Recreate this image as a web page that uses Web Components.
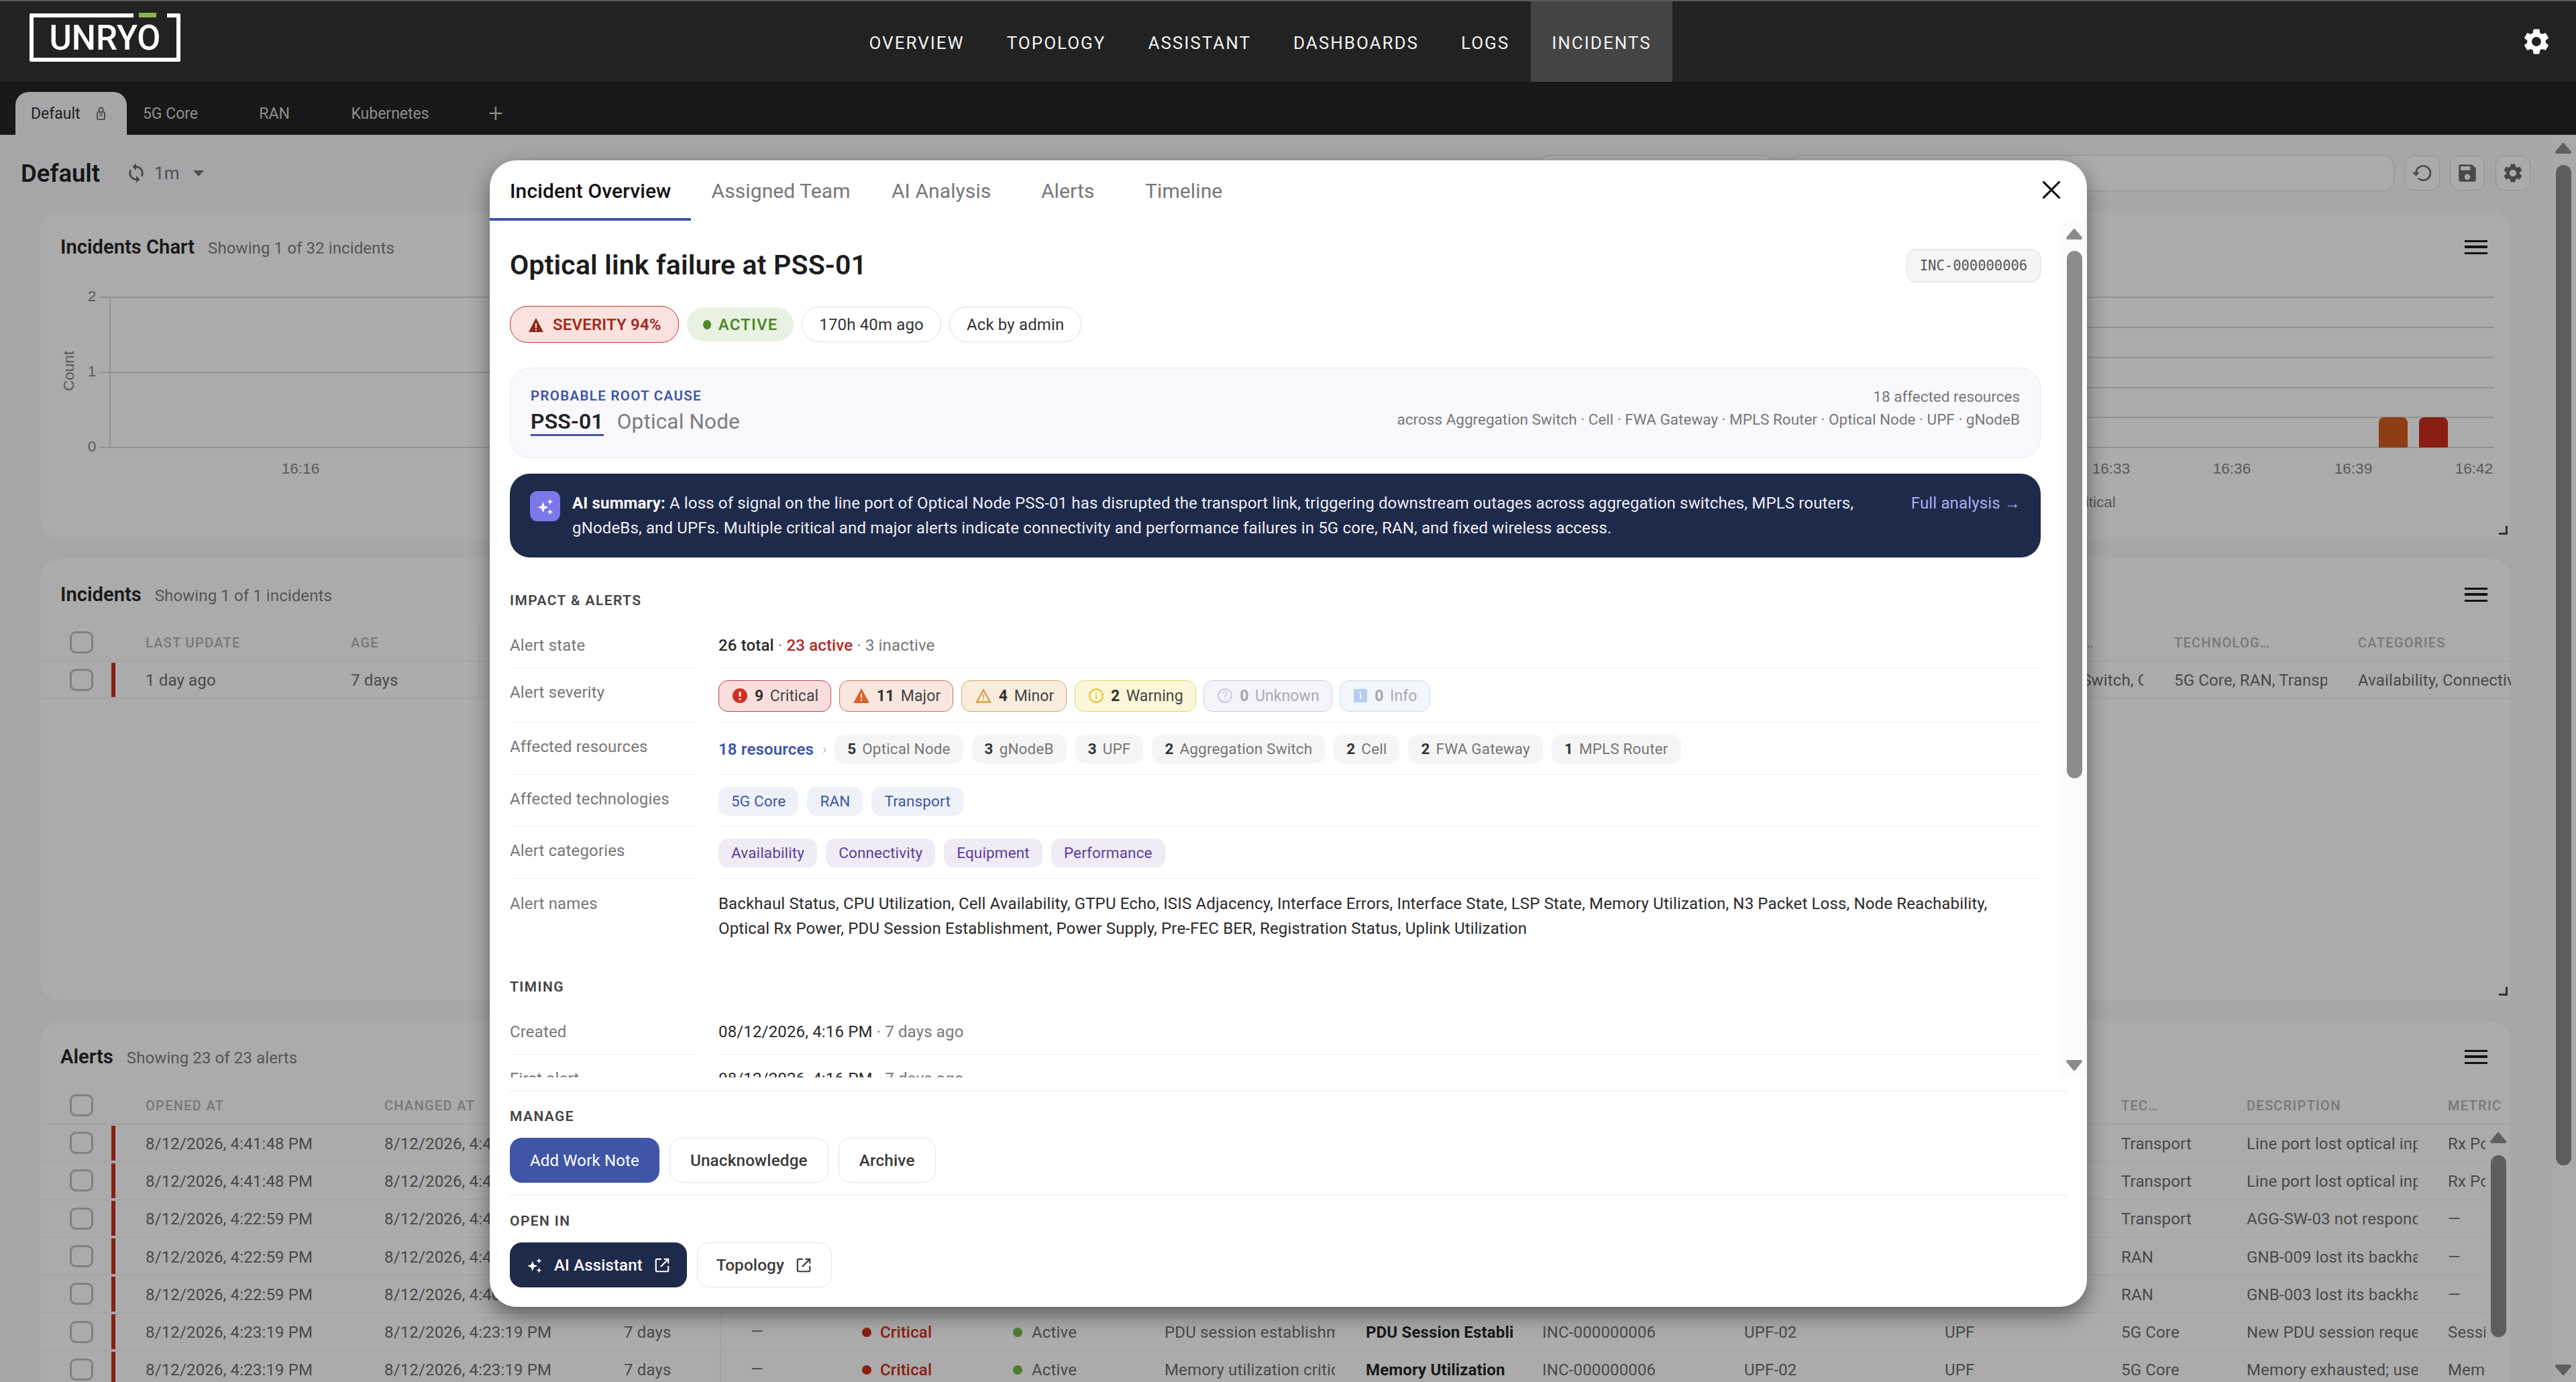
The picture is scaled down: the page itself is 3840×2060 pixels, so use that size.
<!doctype html>
<html>
<head>
<meta charset="utf-8">
<title>Incidents</title>
<style>
  html, body { margin: 0; padding: 0; background: #f8f8fb; }
  body { width: 3840px; height: 2060px; overflow: hidden; font-family: Roboto, "Liberation Sans", sans-serif; color: #222; }
</style>
</head>
<body>
<app-shell>
  <top-nav></top-nav>
  <dash-tabs></dash-tabs>
  <dash-main>
    <dash-toolbar></dash-toolbar>
    <dash-card heading="Incidents Chart" sub="Showing 1 of 32 incidents" h="489" head="106" handle>
      <incident-chart></incident-chart>
    </dash-card>
    <dash-card heading="Incidents" sub="Showing 1 of 1 incidents" h="658" head="97" handle style="margin-top:29px">
      <incident-grid></incident-grid>
    </dash-card>
    <dash-card heading="Alerts" sub="Showing 23 of 23 alerts" h="700" head="98" style="margin-top:31px">
      <alert-grid></alert-grid>
    </dash-card>
  </dash-main>
  <page-backdrop></page-backdrop>
  <incident-modal>
    <incident-overview></incident-overview>
  </incident-modal>
</app-shell>

<script>
  const ICON = {
    gear: '<path d="M19.14 12.94c.04-.3.06-.61.06-.94 0-.32-.02-.64-.07-.94l2.03-1.58c.18-.14.23-.41.12-.61l-1.92-3.32c-.12-.22-.37-.29-.59-.22l-2.39.96c-.5-.38-1.03-.7-1.62-.94l-.36-2.54c-.04-.24-.24-.41-.48-.41h-3.84c-.24 0-.43.17-.47.41l-.36 2.54c-.59.24-1.13.57-1.62.94l-2.39-.96c-.22-.08-.47 0-.59.22L2.74 8.87c-.12.21-.08.47.12.61l2.03 1.58c-.05.3-.09.63-.09.94s.02.64.07.94l-2.03 1.58c-.18.14-.23.41-.12.61l1.92 3.32c.12.22.37.29.59.22l2.39-.96c.5.38 1.03.7 1.62.94l.36 2.54c.05.24.24.41.48.41h3.84c.24 0 .44-.17.47-.41l.36-2.54c.59-.24 1.13-.56 1.62-.94l2.39.96c.22.08.47 0 .59-.22l1.92-3.32c.12-.22.07-.47-.12-.61l-2.01-1.58zM12 15.6c-1.98 0-3.6-1.62-3.6-3.6s1.62-3.6 3.6-3.6 3.6 1.62 3.6 3.6-1.62 3.6-3.6 3.6z"/>',
    save: '<path d="M17 3H5c-1.11 0-2 .9-2 2v14c0 1.1.89 2 2 2h14c1.1 0 2-.9 2-2V7l-4-4zm-5 16c-1.66 0-3-1.34-3-3s1.34-3 3-3 3 1.34 3 3-1.34 3-3 3zm3-10H5V5h10v4z"/>',
    sync: '<path d="M12 4V1L8 5l4 4V6c3.31 0 6 2.69 6 6 0 1.01-.25 1.97-.7 2.8l1.46 1.46C19.54 15.03 20 13.57 20 12c0-4.42-3.58-8-8-8zm0 14c-3.31 0-6-2.69-6-6 0-1.01.25-1.97.7-2.8L5.24 7.74C4.46 8.97 4 10.43 4 12c0 4.42 3.58 8 8 8v3l4-4-4-4v3z"/>',
    sparkle: '<path d="M9 6l1.9 5.1L16 13l-5.1 1.9L9 20l-1.9-5.1L2 13l5.1-1.9z"/><path d="M18 2l1 2.9 2.9 1-2.9 1-1 2.9-1-2.9-2.9-1 2.9-1z"/><path d="M18 15l1 2.9 2.9 1-2.9 1-1 2.9-1-2.9-2.9-1 2.9-1z"/>',
    ext: '<path d="M11 3.5H5A1.5 1.5 0 0 0 3.500 5v14A1.500 1.500 0 0 0 5 20.500h14a1.500 1.500 0 0 0 1.500-1.500v-6" fill="none" stroke="currentColor" stroke-width="2"/><path d="M10 14L20 4M14.500 3.500h6v6" fill="none" stroke="currentColor" stroke-width="2"/>',
    history: '<path d="M5 12a8 8 0 1 1 2.400 5.700" fill="none" stroke="currentColor" stroke-width="2"/><path d="M1 11h8l-4 4.600z"/>'
  };
  const svg = (name, size, extra = '') => `<svg viewBox="0 0 24 24" width="${size}" height="${size}" fill="currentColor" style="display:block;flex:none;${extra}">${ICON[name]}</svg>`;

  // shadow element with a fixed template
  function simple(tag, css, html) {
    customElements.define(tag, class extends HTMLElement {
      constructor() {
        super();
        this.attachShadow({ mode: 'open' }).innerHTML = `<style>${css}</style>${html}`;
      }
    });
  }

  simple('app-shell', `:host{display:block;position:relative;width:3840px;height:2060px;overflow:hidden}`, `<slot></slot>`);

  simple('page-backdrop', `:host{position:absolute;left:0;right:0;top:122px;bottom:0;background:rgba(0,0,0,.33)}`, ``);

  simple('top-nav', `
    :host{display:flex;align-items:stretch;height:120px;background:#222;border-top:2px solid #585858;color:#fff}
    .logo{position:relative;box-sizing:border-box;width:225px;height:72px;margin:18px 0 0 44px;border:6.5px solid #fff;border-radius:2px;
      display:flex;align-items:center;justify-content:center;font-size:51px;font-weight:500;line-height:1}
    .gap{position:absolute;left:149px;top:-7px;width:50px;height:7px;background:#222}
    .leaf{position:absolute;left:157px;top:-7px;width:26px;height:7px;background:#8ab24a}
    nav{display:flex;margin-left:995px}
    a{display:flex;align-items:center;padding:3px 31.500px 0;font-size:26px;font-weight:400;letter-spacing:2px;color:#f2f2f2}
    a.on{background:#444}
    .gear{margin:0 0 0 auto;padding:0 36px 0 0;display:flex;align-items:center}
  `, `
    <div class="logo"><span>UNRYO</span><i class="gap"></i><i class="leaf"></i></div>
    <nav><a>OVERVIEW</a><a>TOPOLOGY</a><a>ASSISTANT</a><a>DASHBOARDS</a><a>LOGS</a><a class="on">INCIDENTS</a></nav>
    <div class="gear">${svg('gear', 46)}</div>
  `);

  simple('dash-tabs', `
    :host{display:flex;align-items:flex-end;height:79px;background:#242424;padding-left:23px;box-sizing:border-box;font-size:23px}
    div{height:64px;display:flex;align-items:center;justify-content:center;box-sizing:border-box;color:#d4d4d4;white-space:nowrap}
    .on{width:166px;justify-content:flex-start;padding-left:23px;background:#f8f8fb;color:#333;border-radius:20px 20px 0 0;gap:23px}
    .lock{width:15px;height:22px;color:#777}
    .plus{font-size:38px;font-weight:300;margin-left:59px;width:32px;color:#cfcfcf}
  `, `
    <div class="on">Default <svg class="lock" viewBox="0 0 15 22" fill="none" stroke="currentColor" stroke-width="2"><rect x="2" y="9" width="11" height="11" rx="1.500"/><path d="M4.500 9V5.500a3 3 0 0 1 6 0V9"/><path d="M5 14.500h5M5 11.500h5" stroke-width="1.500"/></svg></div>
    <div style="width:130px">5G Core</div>
    <div style="width:180px">RAN</div>
    <div style="width:165px">Kubernetes</div>
    <div class="plus">+</div>
  `);

  customElements.define('fake-scroll', class extends HTMLElement {
    constructor() {
      super();
      this.attachShadow({ mode: 'open' });
    }
    connectedCallback() {
      const down = this.hasAttribute('nodown') ? '' : `<svg class="d" width="26" height="18" viewBox="0 0 26 18"><path d="M13 15L23 3H3z" fill="currentColor" stroke="currentColor" stroke-width="4" stroke-linejoin="round"/></svg>`;
      this.shadowRoot.innerHTML = `<style>
        :host{display:flex;flex-direction:column;align-items:center;width:38px;box-sizing:border-box;padding-top:11px;background:#fcfcfc;color:#8c8c8c}
        svg{display:block;flex:none}
        .t{width:23px;background:currentColor;border-radius:12px;flex:none;margin-top:${this.getAttribute('top') - 29}px;height:${this.getAttribute('size')}px}
        .d{margin-top:auto;margin-bottom:9px}
      </style><svg width="26" height="18" viewBox="0 0 26 18"><path d="M13 3L23 15H3z" fill="currentColor" stroke="currentColor" stroke-width="4" stroke-linejoin="round"/></svg>
      <div class="t"></div>${down}`;
    }
  });

  simple('dash-main', `
    :host{display:flex;height:1859px;overflow:hidden;background:#f8f8fb}
    .col{flex:1;min-width:0;overflow:hidden}
  `, `<div class="col"><slot></slot></div><fake-scroll top="45" size="1491"></fake-scroll>`);

  simple('dash-toolbar', `
    :host{display:flex;align-items:center;height:54px;padding:30px 30px 30px 31px}
    h1{margin:0;font-size:36.500px;font-weight:600;color:#222}
    .s{margin-left:38px;color:#666}
    .m{margin-left:11px;font-size:26px;color:#777}
    .c{margin-left:20px;width:0;height:0;border:8px solid transparent;border-top:9px solid #777;border-bottom:0}
    .i{box-sizing:border-box;height:54px;border:1.500px solid #d9d9d9;border-radius:16px;background:#fff}
    .b{box-sizing:border-box;width:52px;height:52px;border:1.500px solid #d9d9d9;border-radius:14px;background:#fff;display:flex;align-items:center;justify-content:center;color:#6c6c6c}
  `, `
    <h1>Default</h1><div class="s">${svg('sync', 32)}</div><div class="m">1m</div><div class="c"></div>
    <div class="i" style="width:350px;margin-left:auto"></div>
    <div class="i" style="width:898px;margin-left:27px"></div>
    <div class="b" style="margin-left:16px">${svg('history', 32)}</div>
    <div class="b" style="margin-left:15px">${svg('save', 34)}</div>
    <div class="b" style="margin-left:16px">${svg('gear', 34)}</div>
  `);

  customElements.define('dash-card', class extends HTMLElement {
    constructor() { super(); this.attachShadow({ mode: 'open' }); }
    connectedCallback() {
      const a = n => this.getAttribute(n);
      this.shadowRoot.innerHTML = `<style>
        :host{display:block;position:relative;box-sizing:border-box;width:3683px;margin-left:60px;height:${a('h')}px;background:#fff;border-radius:30px 30px 0 30px;overflow:hidden}
        header{display:flex;align-items:center;height:106px;margin-bottom:${a('head') - 106}px;padding:0 35px 0 30px;box-sizing:border-box}
        h2{margin:0;font-size:29.200px;font-weight:600;color:#262626}
        span{margin-left:20px;font-size:24px;letter-spacing:.1px;color:#7f7f7f;padding-top:3px}
        .ham{margin-left:auto;width:34px;height:21px;box-sizing:border-box;border-top:3.500px solid #1a1a1a;border-bottom:3.500px solid #1a1a1a;position:relative}
        .ham i{position:absolute;left:0;right:0;top:5.500px;height:3.500px;background:#1a1a1a}
        .rz{position:absolute;right:5px;bottom:7px;width:13px;height:13px;box-sizing:border-box;border-right:3.500px solid #4a4a4a;border-bottom:3.500px solid #4a4a4a}
      </style>
      <header><h2>${a('heading')}</h2><span>${a('sub')}</span><div class="ham"><i></i></div></header>
      <slot></slot>${this.hasAttribute('handle') ? '<div class="rz"></div>' : ''}`;
    }
  });

  customElements.define('incident-chart', class extends HTMLElement {
    constructor() {
      super();
      const line = (x1, y1, x2, y2) => `<line x1="${x1}" y1="${y1}" x2="${x2}" y2="${y2}"/>`;
      const g = [443, 555, 667].map(y => line(148, y, 1300, y)).join('');
      const r = [443, 488, 533, 578, 622, 667].map(y => line(3040, y, 3718, y)).join('');
      const tick = [[3147, '16:33'], [3327, '16:36'], [3508, '16:39'], [3688, '16:42']]
        .map(([x, t]) => `<text x="${x}" y="706" text-anchor="middle">${t}</text>`).join('');
      this.attachShadow({ mode: 'open' }).innerHTML = `<style>
        :host{display:block}
        svg{display:block;font-family:"Liberation Sans",Arial,sans-serif;font-size:22.500px;fill:#868686}
        g{stroke:#dadada;stroke-width:2}
      </style>
      <svg width="3683" height="350" viewBox="60 421 3683 350">
        <g>${g}${r}${line(164, 443, 164, 667)}</g>
        <text x="137" y="449" text-anchor="middle">2</text>
        <text x="137" y="561" text-anchor="middle">1</text>
        <text x="137" y="673" text-anchor="middle">0</text>
        <text transform="translate(110,553) rotate(-90)" text-anchor="middle">Count</text>
        <text x="448" y="706" text-anchor="middle">16:16</text>
        ${tick}
        <text x="3085" y="756">Critical</text>
        <path d="M3546 667v-37a8 8 0 0 1 8-8h27a8 8 0 0 1 8 8v37z" fill="#d45d20"/>
        <path d="M3606 667v-37a8 8 0 0 1 8-8h27a8 8 0 0 1 8 8v37z" fill="#ce2d1b"/>
      </svg>`;
    }
  });

  // one css grid per row, shared by both tables
  const gridCss = (cols, rowH) => `
    :host{display:block;position:relative;font-size:24px;color:#6e6e6e;letter-spacing:.15px}
    .r{display:grid;grid-template-columns:${cols};align-items:center;box-sizing:border-box;height:${rowH}px;border-bottom:1.500px solid #efefef}
    .h{height:56px;font-size:20px;font-weight:500;letter-spacing:1.300px;color:#b4b4b4;border-bottom:1.500px solid #efefef}
    .c{overflow:hidden;white-space:nowrap;min-width:0;padding-top:2px}
    .h .c{padding-top:0}
    .b{font-weight:700;color:#262626}
    .ck{box-sizing:border-box;width:35px;height:33px;margin-left:44px;border:3.500px solid #c0c0c0;border-radius:9px}
    .bar{width:5.500px;height:calc(100% - 3px);background:#ce2d1b}
    .v{border-left:1.500px solid #efefef;height:100%}
    .sev{color:#ce2d1b;font-weight:500;display:flex;align-items:center;gap:13px}
    .st{display:flex;align-items:center;gap:14px}
    .sev i,.st i{display:block;width:14px;height:14px;border-radius:50%;background:currentColor;flex:none}
    .st i{background:#73b945}
  `;
  const ck = `<div class="ck"></div>`;
  const bar = `<div class="bar"></div>`;

  customElements.define('incident-grid', class extends HTMLElement {
    constructor() {
      super();
      const cols = '106px 51px 306px 191px 2251px 276px 274px 228px';
      this.attachShadow({ mode: 'open' }).innerHTML = `<style>${gridCss(cols, 55)}</style>
      <div class="r h">${ck}<div></div><div class="c">LAST UPDATE</div><div class="c">AGE</div><div class="v"></div><div class="c" style="margin-right:100px">RESOURCE TY…</div><div class="c">TECHNOLOG…</div><div class="c">CATEGORIES</div></div>
      <div class="r">${ck}${bar}<div class="c">1 day ago</div><div class="c">7 days</div><div class="v"></div><div class="c" style="margin-right:46px">Aggregation Switch, Cell</div><div class="c" style="margin-right:46px">5G Core, RAN, Transport</div><div class="c">Availability, Connectivity</div></div>`;
    }
  });

  customElements.define('alert-grid', class extends HTMLElement {
    constructor() {
      super();
      const cols = '106px 51px 356px 357px 143px 46px 166px 225px 226px 300px 263px 301px 299px 263px 187px 300px 94px';
      const w = (t, mr) => `<div class="c" style="${mr ? 'margin-right:' + mr + 'px' : ''}">${t}</div>`;
      const e = n => '<div></div>'.repeat(n);
      const head = `<div class="r h">${ck}<div></div>${w('OPENED AT')}${w('CHANGED AT')}${e(10)}${w('TEC…', 40)}${w('DESCRIPTION')}${w('METRIC')}</div>`;
      const top = [
        ['8/12/2026, 4:41:48 PM', '8/12/2026, 4:41:48 PM', 'Transport', 'Line port lost optical input', 'Rx Power'],
        ['8/12/2026, 4:41:48 PM', '8/12/2026, 4:41:48 PM', 'Transport', 'Line port lost optical input', 'Rx Power'],
        ['8/12/2026, 4:22:59 PM', '8/12/2026, 4:41:10 PM', 'Transport', 'AGG-SW-03 not responding', '—'],
        ['8/12/2026, 4:22:59 PM', '8/12/2026, 4:41:10 PM', 'RAN', 'GNB-009 lost its backhaul', '—'],
        ['8/12/2026, 4:22:59 PM', '8/12/2026, 4:40:59 PM', 'RAN', 'GNB-003 lost its backhaul', '—']
      ].map(r => `<div class="r" style="height:56.300px">${ck}${bar}${w(r[0], 20)}${w(r[1], 20)}${e(1)}<div class="v"></div>${e(8)}${w(r[2], 40)}${w(r[3], 45)}${w(r[4], 36)}</div>`).join('');
      const low = [
        ['PDU session establishment failing', 'PDU Session Establishment', 'New PDU session requests', 'Session'],
        ['Memory utilization critical', 'Memory Utilization', 'Memory exhausted; user', 'Memory']
      ].map(r => `<div class="r" style="height:56.300px">${ck}${bar}${w('8/12/2026, 4:23:19 PM', 20)}${w('8/12/2026, 4:23:19 PM', 20)}${w('7 days')}
        <div class="c" style="padding:0 0 0 46px;overflow:visible;box-shadow:inset 1.500px 0 0 #efefef;height:100%;display:flex;align-items:center">—</div>${e(1)}
        <div class="c sev"><i></i>Critical</div><div class="c st"><i></i>Active</div>${w(r[0], 46)}<div class="c b" style="margin-right:44px">${r[1]}</div>${w('INC-000000006')}${w('UPF-02')}${w('UPF')}${w('5G Core', 40)}${w(r[2], 45)}${w(r[3], 36)}</div>`).join('');
      this.attachShadow({ mode: 'open' }).innerHTML = `<style>${gridCss(cols, 56.3)}
        fake-scroll{position:absolute;right:0;top:56px;height:600px;background:#fff}</style>
        ${head}${top}${low}<fake-scroll top="46" size="271" nodown></fake-scroll>`;
    }
  });

  simple('incident-modal', `
    :host{position:absolute;left:730px;top:239px;width:2381px;height:1709px;background:#fff;border-radius:40px;overflow:hidden;display:flex;flex-direction:column;box-shadow:0 12px 30px rgba(0,0,0,.45);letter-spacing:.15px}
    nav{display:flex;flex:none;height:90px;box-sizing:border-box;font-size:30px;letter-spacing:.1px;color:#777;position:relative}
    a{display:flex;align-items:center;justify-content:center;height:90px;box-sizing:border-box;padding:5px 30px 0;border-bottom:4px solid transparent;white-space:nowrap}
    a.on{color:#111;font-weight:500;border-bottom-color:#3f56a6}
    .x{position:absolute;left:2313px;top:29px;width:30px;height:30px;color:#111}
    .body{flex:1;min-height:0;display:flex}
    .port{flex:1;min-width:0;overflow:hidden}
    footer{flex:none;height:342px}
    ::slotted(*){display:block}
  `, `
    <nav>
      <a class="on">Incident Overview</a><a>Assigned Team</a><a style="width:211px;padding:5px 0 0">AI Analysis</a><a style="width:166px;padding:5px 0 0">Alerts</a><a style="width:180px;padding:5px 0 0">Timeline</a>
      <svg class="x" viewBox="0 0 24 24" fill="none" stroke="currentColor" stroke-width="2.500"><path d="M2 2l20 20M22 2L2 22"/></svg>
    </nav>
    <div class="body"><div class="port"><slot></slot></div><fake-scroll top="45" size="786"></fake-scroll></div>
    <footer><modal-actions></modal-actions></footer>
  `);

  simple('section-title', `:host{display:block;font-size:21px;line-height:24px;font-weight:600;letter-spacing:1.400px;color:#444}`, `<slot></slot>`);

  customElements.define('info-row', class extends HTMLElement {
    constructor() { super(); this.attachShadow({ mode: 'open' }); }
    connectedCallback() {
      const line = this.hasAttribute('noline') ? '1.500px solid transparent' : '1.500px solid #eee';
      this.shadowRoot.innerHTML = `<style>
        :host{display:grid;grid-template-columns:281px 1fr;column-gap:30px;font-size:24px;line-height:36px}
        div{padding:18px 0 14.500px;border-bottom:${line};box-sizing:border-box}
        .l{color:#777}
        .v{color:#2a2a2a;display:flex;flex-wrap:wrap;align-items:flex-start;gap:12px 13px;padding-bottom:15.500px}
        .v.t{display:block;line-height:${this.getAttribute('lh') || 36}px;padding-bottom:14.500px}
      </style><div class="l">${this.getAttribute('label')}</div><div class="v ${this.hasAttribute('text') ? 't' : ''}"><slot></slot></div>`;
    }
  });

  const SEV = {
    critical: ['#f9dedd', '#b8454a', `<svg viewBox="0 0 22 22" width="22" height="22"><circle cx="11" cy="11" r="11" fill="#cf2f22"/><path d="M11 5v7.500M11 15v2.500" stroke="#fff" stroke-width="2.800"/></svg>`],
    major: ['#f9e7df', '#c9744f', `<svg viewBox="0 0 24 22" width="24" height="22"><path d="M12 0L24 22H0z" fill="#dd6026"/><path d="M12 8v6.500M12 16.500v2.500" stroke="#fff" stroke-width="2"/></svg>`],
    minor: ['#f9eddd', '#d8a55c', `<svg viewBox="0 0 24 22" width="24" height="22"><path d="M12 2.500L22 20.500H2z" fill="none" stroke="#d8a040" stroke-width="2.400"/><path d="M12 9v5.500M12 16v2" stroke="#d8a040" stroke-width="1.800"/></svg>`],
    warning: ['#fbf6d9', '#e8d56d', `<svg viewBox="0 0 22 22" width="22" height="22"><circle cx="11" cy="11" r="9.800" fill="none" stroke="#e3cc4a" stroke-width="2.400"/><path d="M11 9.500v7M11 5.500v2" stroke="#d9bf3a" stroke-width="1.800"/></svg>`],
    unknown: ['#f6f4fb', '#cccbe3', `<svg viewBox="0 0 22 22" width="22" height="22"><circle cx="11" cy="11" r="9.800" fill="none" stroke="#cfcbe8" stroke-width="2.400"/><path d="M8 8.500a3 3 0 1 1 4.500 2.600c-1 .6-1.500 1-1.500 2.200M11 15v2" fill="none" stroke="#cfcbe8" stroke-width="1.800"/></svg>`],
    info: ['#f2f6fd', '#d0dcf2', `<svg viewBox="0 0 20 20" width="20" height="20"><rect width="20" height="20" rx="2" fill="#b7cdf5"/><path d="M10 8.500v6.500M10 4.500v2" stroke="#fff" stroke-width="2"/></svg>`]
  };
  customElements.define('sev-chip', class extends HTMLElement {
    constructor() { super(); this.attachShadow({ mode: 'open' }); }
    connectedCallback() {
      const s = SEV[this.getAttribute('kind')];
      const off = this.getAttribute('n') === '0';
      this.shadowRoot.innerHTML = `<style>
        :host{display:flex;align-items:center;box-sizing:border-box;height:47px;padding:0 18px 0 20px;margin-right:-1.500px;background:${s[0]};border:1.500px solid ${s[1]};border-radius:14px;font-size:23px;letter-spacing:.1px;line-height:1;color:${off ? '#a9a9b2' : '#444'}}
        svg{display:block;flex:none;margin-right:11px}
        b{font-weight:700;color:${off ? '#a5a5ad' : '#333'};margin-right:9.500px}
      </style>${s[2]}<b>${this.getAttribute('n')}</b><span>${this.getAttribute('label')}</span>`;
    }
  });

  const TAG = { plain: ['#f5f5f6', '#757575'], tech: ['#eef1f8', '#3f56a6'], cat: ['#efecf6', '#5b3d9c'] };
  customElements.define('tag-chip', class extends HTMLElement {
    constructor() { super(); this.attachShadow({ mode: 'open' }); }
    connectedCallback() {
      const t = TAG[this.getAttribute('kind') || 'plain'];
      this.shadowRoot.innerHTML = `<style>
        :host{display:flex;align-items:center;gap:9px;box-sizing:border-box;height:43px;padding:0 19px;background:${t[0]};border-radius:14px;font-size:22.500px;letter-spacing:.15px;line-height:1;color:${t[1]}}
        b{font-weight:700;color:#333}
      </style>${this.getAttribute('n') ? `<b>${this.getAttribute('n')}</b>` : ''}<slot></slot>`;
    }
  });

  customElements.define('action-btn', class extends HTMLElement {
    constructor() { super(); this.attachShadow({ mode: 'open' }); }
    connectedCallback() {
      const k = this.getAttribute('kind') || 'plain';
      const c = { plain: ['#fff', '#3a3a3a', '1.500px solid #e2e2e2'], blue: ['#3f56a6', '#fff', 'none'], navy: ['#1e2a4a', '#fff', 'none'] }[k];
      this.shadowRoot.innerHTML = `<style>
        :host{display:flex;align-items:center;gap:16px;box-sizing:border-box;height:67px;padding:0 ${this.getAttribute('pad') || 30}px;background:${c[0]};color:${c[1]};border:${c[2]};border-radius:18px;font-size:${k === 'plain' ? 24.3 : 24}px;font-weight:${k === 'blue' ? 400 : 500};white-space:nowrap}
      </style>${this.hasAttribute('spark') ? svg('sparkle', 26) : ''}<slot></slot>${this.hasAttribute('ext') ? svg('ext', 26) : ''}`;
    }
  });

  simple('modal-actions', `
    :host{display:block;padding:20px 30px 0}
    .s{border-top:1.500px solid #e6e6e6;padding:25px 0 18px}
    .s + .s{padding-top:26px}
    .row{display:flex;gap:15px;margin-top:20px}
  `, `
    <div class="s"><section-title>MANAGE</section-title><div class="row"><action-btn kind="blue">Add Work Note</action-btn><action-btn>Unacknowledge</action-btn><action-btn>Archive</action-btn></div></div>
    <div class="s"><section-title>OPEN IN</section-title><div class="row"><action-btn kind="navy" spark ext pad="24">AI Assistant</action-btn><action-btn ext pad="28">Topology</action-btn></div></div>
  `);

  simple('incident-overview', `
    :host{display:block;padding:42px 31px 0 30px;color:#2a2a2a}
    .top{display:flex;align-items:center;justify-content:space-between;height:50px}
    h1{margin:-2px 0 0;font-size:41px;font-weight:600;color:#1c1c1c}
    code{box-sizing:border-box;height:50px;width:200px;display:flex;align-items:center;justify-content:center;background:#f5f5f5;border:1.500px solid #ddd;border-radius:14px;font:20.500px "DejaVu Sans Mono",monospace;letter-spacing:0;color:#555}
    .pills{display:flex;align-items:center;gap:12px;margin-top:35px;height:55px}
    .pill{display:flex;align-items:center;box-sizing:border-box;height:53px;padding:0 25px;border:1.500px solid #ddd;border-radius:26px;font-size:24px;color:#333;white-space:nowrap}
    .sv{height:55px;background:#fbe2df;border-color:#c0392b;color:#a52a1c;font-weight:600;gap:13px;padding:0 25px 0 26px}
    .ac{height:51px;background:#e9f2e2;border:none;color:#4f8a2a;font-weight:600;gap:11px;padding:0 24px;letter-spacing:1.100px}
    .ac i{width:12px;height:14px;border-radius:50%;background:currentColor}
    .root{box-sizing:border-box;height:135px;margin-top:37px;padding:29px 30px 0;background:#f8f8fd;border:1.500px solid #e9e9f2;border-radius:30px;display:flex;justify-content:space-between}
    .cap{font-size:20.500px;line-height:24px;font-weight:600;letter-spacing:1.300px;color:#3f56a6}
    .nm{display:flex;align-items:baseline;gap:20px;margin-top:8px}
    .nm b{font-size:32px;font-weight:600;line-height:37px;color:#222;border-bottom:3.500px solid #3f56a6}
    .nm span{font-size:31.500px;color:#7d7d7d}
    .res{text-align:right;font-size:22.500px;letter-spacing:0;color:#777;line-height:34px;margin-top:-4px}
    .ai{box-sizing:border-box;height:125px;margin-top:23px;padding:26px 30px 0;background:#1e2a4a;border-radius:30px;display:flex;color:#eceef5;font-size:24px;line-height:37px}
    .spk{width:45px;height:45px;flex:none;border-radius:11px;background:#7b78ea;color:#fff;display:flex;align-items:center;justify-content:center;margin:0 18px 0 0}
    .ai p{margin:0;flex:1}
    .ai p b{font-weight:700;color:#fff}
    .ai a{margin-left:40px;color:#a9aef0;white-space:nowrap}
    section-title{margin:52px 0 19px}
    .red{color:#b02a2a;font-weight:500}
    .dim{color:#777}
    b{font-weight:500}
    .link{display:flex;align-items:center;height:43px;color:#3f56a6;font-weight:600;font-size:24px;margin-right:-1px}
    .link i{font-style:normal;color:#bbb;margin-left:13px;font-weight:400;font-size:20px}
    .names{margin-top:1px}
  `, `
    <div class="top"><h1>Optical link failure at PSS-01</h1><code>INC-000000006</code></div>
    <div class="pills">
      <div class="pill sv"><svg viewBox="0 0 24 24" width="24" height="26" fill="currentColor" style="color:#8e2a1c"><path d="M12 2L23 23H1z"/><path d="M12 10v7M12 18.500v2" stroke="#fbe2df" stroke-width="2"/></svg>SEVERITY 94%</div>
      <div class="pill ac"><i></i>ACTIVE</div>
      <div class="pill">170h 40m ago</div>
      <div class="pill">Ack by admin</div>
    </div>
    <div class="root">
      <div><div class="cap">PROBABLE ROOT CAUSE</div><div class="nm"><b>PSS-01</b><span>Optical Node</span></div></div>
      <div class="res">18 affected resources<br>across Aggregation Switch · Cell · FWA Gateway · MPLS Router · Optical Node · UPF · gNodeB</div>
    </div>
    <div class="ai">
      <div class="spk">${svg('sparkle', 28)}</div>
      <p><b>AI summary:</b> A loss of signal on the line port of Optical Node PSS-01 has disrupted the transport link, triggering downstream outages across aggregation switches, MPLS routers, gNodeBs, and UPFs. Multiple critical and major alerts indicate connectivity and performance failures in 5G core, RAN, and fixed wireless access.</p>
      <a>Full analysis →</a>
    </div>

    <section-title>IMPACT &amp; ALERTS</section-title>
    <info-row label="Alert state" text><b>26 total</b> <span class="dim">·</span> <span class="red">23 active</span> <span class="dim">· 3 inactive</span></info-row>
    <info-row label="Alert severity">
      <sev-chip kind="critical" n="9" label="Critical"></sev-chip>
      <sev-chip kind="major" n="11" label="Major"></sev-chip>
      <sev-chip kind="minor" n="4" label="Minor"></sev-chip>
      <sev-chip kind="warning" n="2" label="Warning"></sev-chip>
      <sev-chip kind="unknown" n="0" label="Unknown"></sev-chip>
      <sev-chip kind="info" n="0" label="Info"></sev-chip>
    </info-row>
    <info-row label="Affected resources">
      <div class="link">18 resources<i>›</i></div>
      <tag-chip n="5">Optical Node</tag-chip><tag-chip n="3">gNodeB</tag-chip><tag-chip n="3">UPF</tag-chip><tag-chip n="2">Aggregation Switch</tag-chip><tag-chip n="2">Cell</tag-chip><tag-chip n="2">FWA Gateway</tag-chip><tag-chip n="1">MPLS Router</tag-chip>
    </info-row>
    <info-row label="Affected technologies"><tag-chip kind="tech">5G Core</tag-chip><tag-chip kind="tech">RAN</tag-chip><tag-chip kind="tech">Transport</tag-chip></info-row>
    <info-row label="Alert categories"><tag-chip kind="cat">Availability</tag-chip><tag-chip kind="cat">Connectivity</tag-chip><tag-chip kind="cat">Equipment</tag-chip><tag-chip kind="cat">Performance</tag-chip></info-row>
    <info-row class="names" label="Alert names" text noline lh="37">Backhaul Status, CPU Utilization, Cell Availability, GTPU Echo, ISIS Adjacency, Interface Errors, Interface State, LSP State, Memory Utilization, N3 Packet Loss, Node Reachability, Optical Rx Power, PDU Session Establishment, Power Supply, Pre-FEC BER, Registration Status, Uplink Utilization</info-row>

    <section-title style="margin-top:41px">TIMING</section-title>
    <info-row label="Created" text>08/12/2026, 4:16 PM <span class="dim">· 7 days ago</span></info-row>
    <info-row label="First alert" text>08/12/2026, 4:16 PM <span class="dim">· 7 days ago</span></info-row>
  `);
</script>
</body>
</html>
